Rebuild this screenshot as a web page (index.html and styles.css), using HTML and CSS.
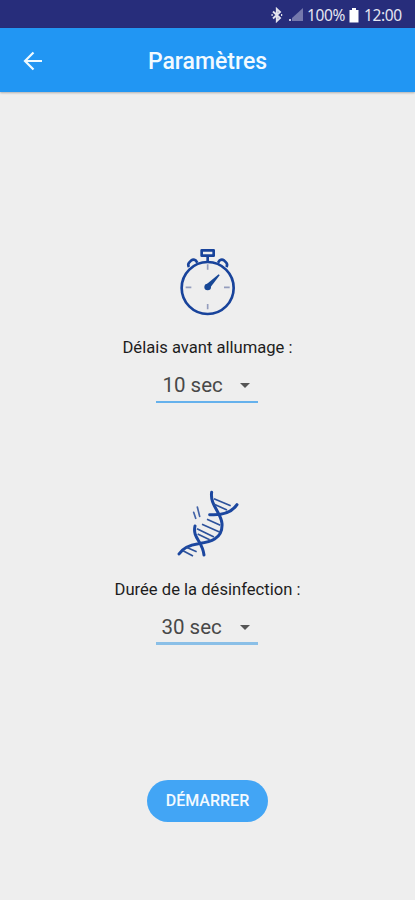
FILE: index.html
```html
<!DOCTYPE html>
<html lang="fr">
<head>
<meta charset="utf-8">
<title>Paramètres</title>
<link rel="stylesheet" href="styles.css">
</head>
<body>
<div class="status">
  <svg class="bluetooth" viewBox="0 0 12 16"><path d="M2 4.5 9 11 5.8 14V2L9 5 2 11.5"/><path d="M.5 8h1.2M10 8h1.2"/></svg>
  <svg class="signal" viewBox="0 0 14 14"><path class="dim" d="M14 0v13H3V10Z"/><path class="lit" d="M0 11h2v2H0z"/></svg>
  <span class="battery-level">100%</span>
  <svg class="battery" viewBox="0 0 10 15"><path d="M3 0h4v2h2.5v12.5h-9V2H3z"/></svg>
  <span class="clock">12:00</span>
</div>
<header class="bar">
  <svg class="back" viewBox="0 0 20 20"><path d="M19 10H2M10.5 1.5 2 10l8.5 8.5"/></svg>
  <h1>Paramètres</h1>
</header>
<main>
  <section class="delay">
    <svg class="icon" viewBox="0 0 255 270">
      <g class="outline">
        <circle cx="128" cy="159" r="78"/>
        <path d="M110 46h36v16h-36zM128 62v18M72 96q-5-8 1-14l6-6q6-4 13 0l5 7M184 96q5-8-1-14l-6-6q-6-4-13 0l-5 7"/>
      </g>
      <path class="tick" d="M128 88v16M128 207v16M62 157h17M177 157h17"/>
      <path class="hand" d="m121 151 40-33 3 3-31 40z"/>
      <circle class="hand" cx="128" cy="156" r="10"/>
    </svg>
    <p class="label">Délais avant allumage :</p>
    <div class="select"><span>10 sec</span><i class="caret"></i></div>
  </section>
  <section class="duration">
    <svg class="icon" viewBox="0 0 255 270">
      <g class="strand">
        <path d="M140 37C134 74 169 99 171 131C174 180 130 186 100 191Q58 197 42 222"/>
        <path d="M216 74Q193 108 134 104M90 138C82 175 112 182 117 225"/>
      </g>
      <path class="rung" d="m147 56 50 21M146 72l40 18M126 118l40 18M111 133l54 24M96 146l51 25M98 162l36 17M64 202l31 13M54 212l30 16"/>
      <path class="spark" d="m97 81 7 28M86 97l6 18"/>
    </svg>
    <p class="label">Durée de la désinfection :</p>
    <div class="select"><span>30 sec</span><i class="caret"></i></div>
  </section>
  <button>DÉMARRER</button>
</main>
</body>
</html>
```

FILE: styles.css
```css
* { box-sizing: border-box; }
body {
  margin: 0;
  height: 900px;
  background: #eee;
  font-family: Roboto, "Liberation Sans", sans-serif;
  overflow: hidden;
}
svg { display: block; flex: none; }
.status {
  height: 28px;
  padding: 2px 13px 0 0;
  display: flex;
  align-items: center;
  justify-content: flex-end;
  background: #272d7b;
  color: #e4e6f2;
  font: 15.5px/24px "Noto Sans", sans-serif;
}
.bluetooth { width: 12px; height: 16px; margin-right: 6px; fill: none; stroke: #e4e4ed; stroke-width: 1.9; }
.signal { width: 14px; height: 14px; margin-right: 4px; }
.dim { fill: #7478ac; }
.lit { fill: #c4c6df; }
.battery { width: 10px; height: 15px; margin: 0 5px 0 4px; fill: #fff; }
.battery-level { width: 38px; letter-spacing: -.4px; white-space: nowrap; }
.clock { width: 38px; letter-spacing: -.4px; }
.bar {
  height: 64px;
  padding: 2px 23px 0;
  display: grid;
  grid-template-columns: 20px 1fr 20px;
  align-items: center;
  background: #2196f3;
  color: #f2faff;
  box-shadow: 0 1px 2px #0004;
}
.back { width: 20px; height: 20px; fill: none; stroke: #eefaff; stroke-width: 2.2; }
h1 { margin: 2px 0 0; font-size: 23px; line-height: 28px; font-weight: 500; text-align: center; }
main { display: flex; flex-direction: column; align-items: center; }
section { display: flex; flex-direction: column; align-items: center; }
.delay { margin-top: 143px; }
.duration { margin-top: 77px; }
.icon { width: 85px; height: 90px; }
.outline { fill: none; stroke: #18439b; stroke-width: 8; stroke-linejoin: round; }
.tick { fill: none; stroke: #949dbd; stroke-width: 5; }
.hand { fill: #174795; }
.strand { fill: none; stroke: #1c479f; stroke-width: 9; stroke-linecap: round; stroke-linejoin: round; }
.rung { stroke: #2d529b; stroke-width: 5; }
.spark { stroke: #4262a6; stroke-width: 5; stroke-linecap: round; }
.label { margin: 13px 0 0; color: #1d1d1d; font-size: 16.6px; line-height: 20px; white-space: nowrap; }
.duration .label { margin-top: 10px; }
.select {
  width: 102px;
  height: 32px;
  margin-top: 13px;
  padding: 0 8px 0 6px;
  display: flex;
  align-items: center;
  justify-content: space-between;
  border-bottom: 2px solid #65b1ec;
  color: #484848;
  font-size: 20.5px;
  line-height: 30px;
}
.duration .select { padding-left: 5px; border-bottom: 3px solid #8abfe7; }
.select span { margin-top: -2px; }
.caret { margin-top: -1px; border: 5.5px solid transparent; border-top-color: #555; border-bottom: 0; }
button {
  width: 121px;
  height: 42px;
  margin-top: 135px;
  padding: 0;
  border: 0;
  border-radius: 21px;
  background: #42a5f5;
  color: #f3faff;
  font: 500 16px/42px Roboto, sans-serif;
}
```
